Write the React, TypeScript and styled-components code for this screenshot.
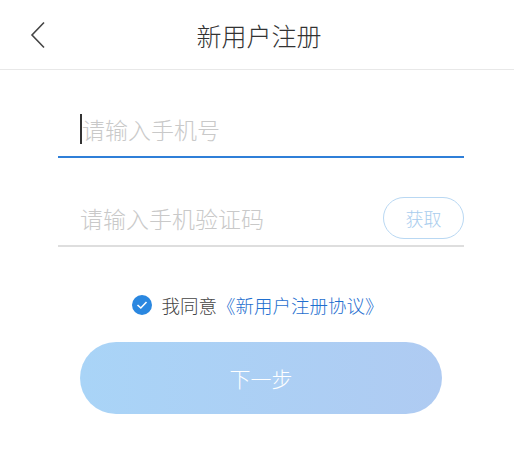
import React from "react";
import styled, { createGlobalStyle } from "styled-components";

const GlobalStyle = createGlobalStyle`
  body {
    margin: 0;
    background: #fff;
    font-family: "Noto Sans CJK SC", "Noto Sans", sans-serif;
  }
`;

const Page = styled.div`
  width: 514px;
  height: 475px;
  background: #fff;
`;

const Header = styled.div`
  height: 69px;
  border-bottom: 1px solid #e8e8e8;
  display: flex;
  align-items: center;
  justify-content: center;
  position: relative;
`;

const Back = styled.button`
  position: absolute;
  left: 26px;
  top: 20px;
  width: 24px;
  height: 30px;
  padding: 0;
  border: none;
  background: none;
  display: flex;
  align-items: center;
  justify-content: center;
`;

const Title = styled.div`
  font-size: 25px;
  font-weight: 300;
  color: #333;
  margin-left: 4px;
`;

const Form = styled.div`
  padding: 0 50px 0 58px;
`;

const Row = styled.div<{ $active?: boolean; $top: number }>`
  margin-top: ${(p) => p.$top}px;
  height: 54px;
  border-bottom: 2px solid ${(p) => (p.$active ? "#2f7fd8" : "#dedede")};
  display: flex;
  align-items: center;
  padding-left: 22px;
`;

const Caret = styled.span`
  width: 2px;
  height: 30px;
  background: #333;
  flex-shrink: 0;
`;

const Input = styled.input`
  flex: 1;
  min-width: 0;
  border: none;
  outline: none;
  padding: 0;
  font-family: inherit;
  font-size: 23px;
  font-weight: 300;
  color: #333;
  background: transparent;
  &::placeholder {
    color: #c9c9c9;
  }
`;

const CodeButton = styled.button`
  width: 81px;
  height: 42px;
  border: 1px solid #b9d8f3;
  border-radius: 21px;
  background: #fff;
  color: #a9cdee;
  font-family: inherit;
  font-size: 18px;
  font-weight: 300;
  padding: 0;
  flex-shrink: 0;
`;

const Agree = styled.div`
  margin-top: 45px;
  display: flex;
  align-items: center;
  justify-content: center;
  font-size: 18.5px;
  font-weight: 300;
  color: #444;
  padding-left: 2px;
`;

const Check = styled.span`
  width: 20px;
  height: 20px;
  border-radius: 50%;
  background: #2a87e0;
  display: flex;
  align-items: center;
  justify-content: center;
  margin-right: 9px;
`;

const Link = styled.span`
  color: #1f6fcf;
`;

const Next = styled.button`
  margin: 24px 0 0 80px;
  width: 362px;
  height: 72px;
  border: none;
  border-radius: 36px;
  background: linear-gradient(90deg, #a9d4f7, #afcbf2);
  color: #fff;
  font-family: inherit;
  font-size: 21px;
  font-weight: 300;
  display: block;
`;

export default function App() {
  return (
    <Page>
      <GlobalStyle />
      <Header>
        <Back aria-label="返回">
          <svg width="18" height="28" viewBox="0 0 18 28">
            <path d="M15 1.5 L3 14 L15 26.5" fill="none" stroke="#444" strokeWidth="1.6" />
          </svg>
        </Back>
        <Title>新用户注册</Title>
      </Header>
      <Form>
        <Row $active $top={32}>
          <Caret />
          <Input placeholder="请输入手机号" />
        </Row>
        <Row $top={33}>
          <Input placeholder="请输入手机验证码" />
          <CodeButton>获取</CodeButton>
        </Row>
      </Form>
      <Agree>
        <Check>
          <svg width="12" height="10" viewBox="0 0 12 10">
            <path d="M1.5 5 L4.8 8 L10.5 2" fill="none" stroke="#fff" strokeWidth="1.6" />
          </svg>
        </Check>
        我同意<Link>《新用户注册协议》</Link>
      </Agree>
      <Next>下一步</Next>
    </Page>
  );
}
